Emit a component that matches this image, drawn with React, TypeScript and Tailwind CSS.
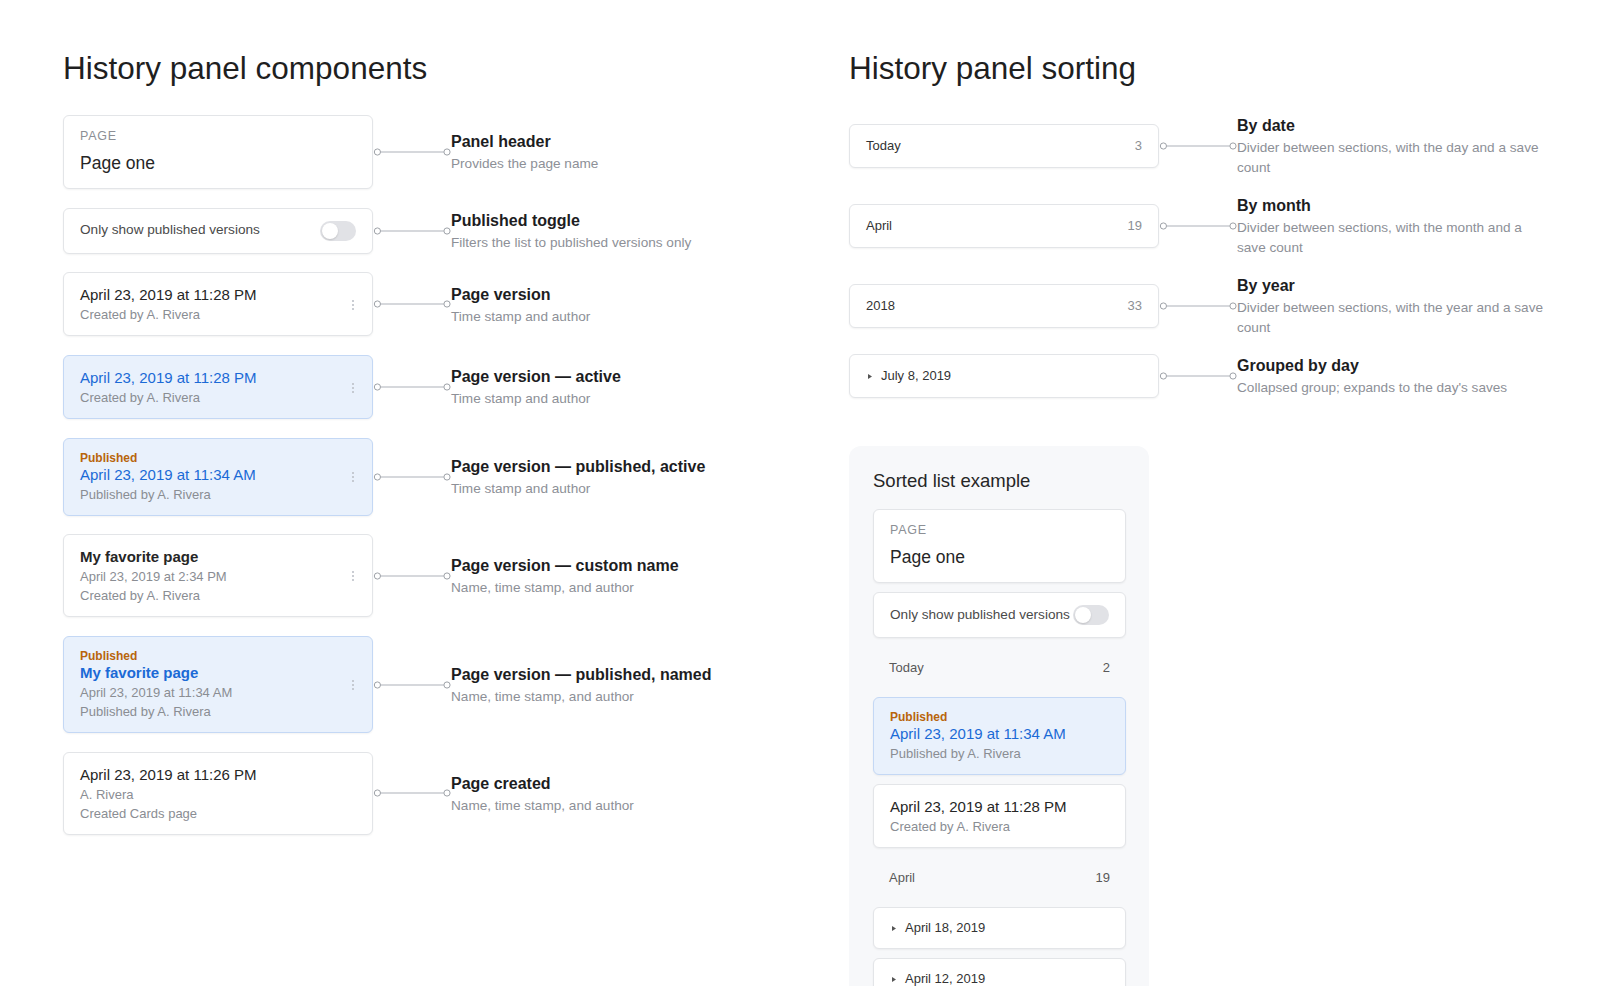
import type { ReactNode } from "react";

const cardBase =
  "rounded-[6px] border shadow-[0_1px_2px_rgba(0,0,0,0.05)]";
const cardPlain = `${cardBase} border-[#e3e5e8] bg-white`;
const cardActive = `${cardBase} border-[#c4d8f5] bg-[#e9f1fc]`;

function Connector() {
  return (
    <svg width="78" height="10" viewBox="0 0 78 10" className="shrink-0">
      <line x1="7.6" y1="5" x2="70.8" y2="5" stroke="#c8cbd0" strokeWidth="1.5" />
      <circle cx="4.4" cy="5" r="3.1" fill="#fff" stroke="#9ea2a8" strokeWidth="1" />
      <circle cx="74" cy="5" r="3.1" fill="#fff" stroke="#9ea2a8" strokeWidth="1" />
    </svg>
  );
}

function Label({ title, desc, wide }: { title: string; desc: string; wide?: boolean }) {
  return (
    <div className={wide ? "w-[312px]" : ""}>
      <div className="text-[16px] font-semibold leading-[24px] text-[#1d1d1f]">{title}</div>
      <div className="text-[13.6px] leading-[19.5px] text-[#8d9097]">{desc}</div>
    </div>
  );
}

function Row({ children, title, desc, wide }: { children: ReactNode; title: string; desc: string; wide?: boolean }) {
  return (
    <div className="flex items-center">
      <div className="w-[310px] shrink-0">{children}</div>
      <Connector />
      <Label title={title} desc={desc} wide={wide} />
    </div>
  );
}

function Dots() {
  return (
    <div className="flex flex-col gap-[2px]">
      <span className="h-[2px] w-[2px] rounded-full bg-[#b9bdc4]" />
      <span className="h-[2px] w-[2px] rounded-full bg-[#b9bdc4]" />
      <span className="h-[2px] w-[2px] rounded-full bg-[#b9bdc4]" />
    </div>
  );
}

function HeaderCard() {
  return (
    <div className={`${cardPlain} pl-[16px] pt-[12px] pb-[14px]`}>
      <div className="text-[12.5px] leading-[16px] tracking-[0.06em] text-[#8c8f95]">PAGE</div>
      <div className="mt-[8px] text-[17.5px] leading-[22px] text-[#262626]">Page one</div>
    </div>
  );
}

function Toggle() {
  return (
    <div className="flex h-[20px] w-[36px] shrink-0 items-center rounded-full bg-[#e1e2e6]">
      <span className="ml-[2px] h-[16px] w-[16px] rounded-full bg-white shadow-[0_1px_2px_rgba(0,0,0,0.15)]" />
    </div>
  );
}

function ToggleCard() {
  return (
    <div className={`${cardPlain} flex h-[46px] items-center justify-between pl-[16px] pr-[16px]`}>
      <span className="text-[13.6px] text-[#4a4a4a]">Only show published versions</span>
      <Toggle />
    </div>
  );
}

interface VersionProps {
  title: string;
  lines: string[];
  active?: boolean;
  published?: boolean;
  named?: boolean;
  dots?: boolean;
}

function VersionCard({ title, lines, active, published, named, dots }: VersionProps) {
  return (
    <div
      className={`${active ? cardActive : cardPlain} flex items-center pl-[16px] pr-[18px] pt-[12px] pb-[11px]`}
    >
      <div className="flex-1">
        {published && (
          <div className="text-[12px] font-bold leading-[14px] text-[#b8650c]">Published</div>
        )}
        <div
          className={`text-[15px] leading-[20px] ${named ? "font-semibold" : ""} ${
            active ? "text-[#1b6ad6]" : "text-[#262626]"
          }`}
        >
          {title}
        </div>
        {lines.map((l) => (
          <div key={l} className="text-[13px] leading-[19px] text-[#8a8d93]">
            {l}
          </div>
        ))}
      </div>
      {dots && <Dots />}
    </div>
  );
}

function SortCard({ text, count }: { text: string; count: string }) {
  return (
    <div className={`${cardPlain} flex h-[44px] items-center justify-between px-[16px] text-[13px]`}>
      <span className="text-[#333]">{text}</span>
      <span className="text-[#8c8f94]">{count}</span>
    </div>
  );
}

function Caret() {
  return (
    <svg width="4" height="5" viewBox="0 0 4 5" className="shrink-0">
      <polygon points="0,0 4,2.5 0,5" fill="#555" />
    </svg>
  );
}

function GroupCard({ text, h = "h-[44px]" }: { text: string; h?: string }) {
  return (
    <div className={`${cardPlain} flex ${h} items-center gap-[9px] pl-[18px] text-[13px] text-[#333]`}>
      <Caret />
      <span>{text}</span>
    </div>
  );
}

function SectionHeader({ text, count }: { text: string; count: string }) {
  return (
    <div className="flex h-[41px] items-center justify-between px-[16px] text-[13px] text-[#595959]">
      <span>{text}</span>
      <span>{count}</span>
    </div>
  );
}

export default function App() {
  return (
    <div className="h-[986px] overflow-hidden bg-white font-['Liberation_Sans',Arial,sans-serif] text-[#222]">
      <div className="flex pl-[63px] pt-[49px]">
        <section className="w-[786px] shrink-0">
          <h1 className="text-[31.5px] font-normal leading-[38px] text-[#1f1f1f]">
            History panel components
          </h1>
          <div className="mt-[28px] flex flex-col gap-[18.7px]">
            <Row title="Panel header" desc="Provides the page name">
              <HeaderCard />
            </Row>
            <Row title="Published toggle" desc="Filters the list to published versions only">
              <ToggleCard />
            </Row>
            <Row title="Page version" desc="Time stamp and author">
              <VersionCard title="April 23, 2019 at 11:28 PM" lines={["Created by A. Rivera"]} dots />
            </Row>
            <Row title="Page version — active" desc="Time stamp and author">
              <VersionCard title="April 23, 2019 at 11:28 PM" lines={["Created by A. Rivera"]} active dots />
            </Row>
            <Row title="Page version — published, active" desc="Time stamp and author">
              <VersionCard
                title="April 23, 2019 at 11:34 AM"
                lines={["Published by A. Rivera"]}
                active
                published
                dots
              />
            </Row>
            <Row title="Page version — custom name" desc="Name, time stamp, and author">
              <VersionCard
                title="My favorite page"
                lines={["April 23, 2019 at 2:34 PM", "Created by A. Rivera"]}
                named
                dots
              />
            </Row>
            <Row title="Page version — published, named" desc="Name, time stamp, and author">
              <VersionCard
                title="My favorite page"
                lines={["April 23, 2019 at 11:34 AM", "Published by A. Rivera"]}
                named
                active
                published
                dots
              />
            </Row>
            <Row title="Page created" desc="Name, time stamp, and author">
              <VersionCard title="April 23, 2019 at 11:26 PM" lines={["A. Rivera", "Created Cards page"]} />
            </Row>
          </div>
        </section>

        <section className="shrink-0">
          <h1 className="text-[31.5px] font-normal leading-[38px] text-[#1f1f1f]">History panel sorting</h1>
          <div className="mt-[27px] flex flex-col gap-[17px]">
            <Row wide title="By date" desc="Divider between sections, with the day and a save count">
              <SortCard text="Today" count="3" />
            </Row>
            <Row wide title="By month" desc="Divider between sections, with the month and a save count">
              <SortCard text="April" count="19" />
            </Row>
            <Row wide title="By year" desc="Divider between sections, with the year and a save count">
              <SortCard text="2018" count="33" />
            </Row>
            <Row wide title="Grouped by day" desc="Collapsed group; expands to the day's saves">
              <GroupCard text="July 8, 2019" />
            </Row>
          </div>

          <div className="mt-[48px] w-[300px] rounded-[12px] bg-[#f7f8fa] pb-[24px] pl-[24px] pr-[23px] pt-[23px]">
            <h2 className="mb-[16px] text-[18.5px] font-normal leading-[24px] text-[#262626]">
              Sorted list example
            </h2>
            <div className="flex flex-col gap-[9px]">
              <HeaderCard />
              <ToggleCard />
              <SectionHeader text="Today" count="2" />
              <VersionCard
                title="April 23, 2019 at 11:34 AM"
                lines={["Published by A. Rivera"]}
                active
                published
              />
              <VersionCard title="April 23, 2019 at 11:28 PM" lines={["Created by A. Rivera"]} />
              <SectionHeader text="April" count="19" />
              <GroupCard text="April 18, 2019" h="h-[42px]" />
              <GroupCard text="April 12, 2019" h="h-[42px]" />
            </div>
          </div>
        </section>
      </div>
    </div>
  );
}
